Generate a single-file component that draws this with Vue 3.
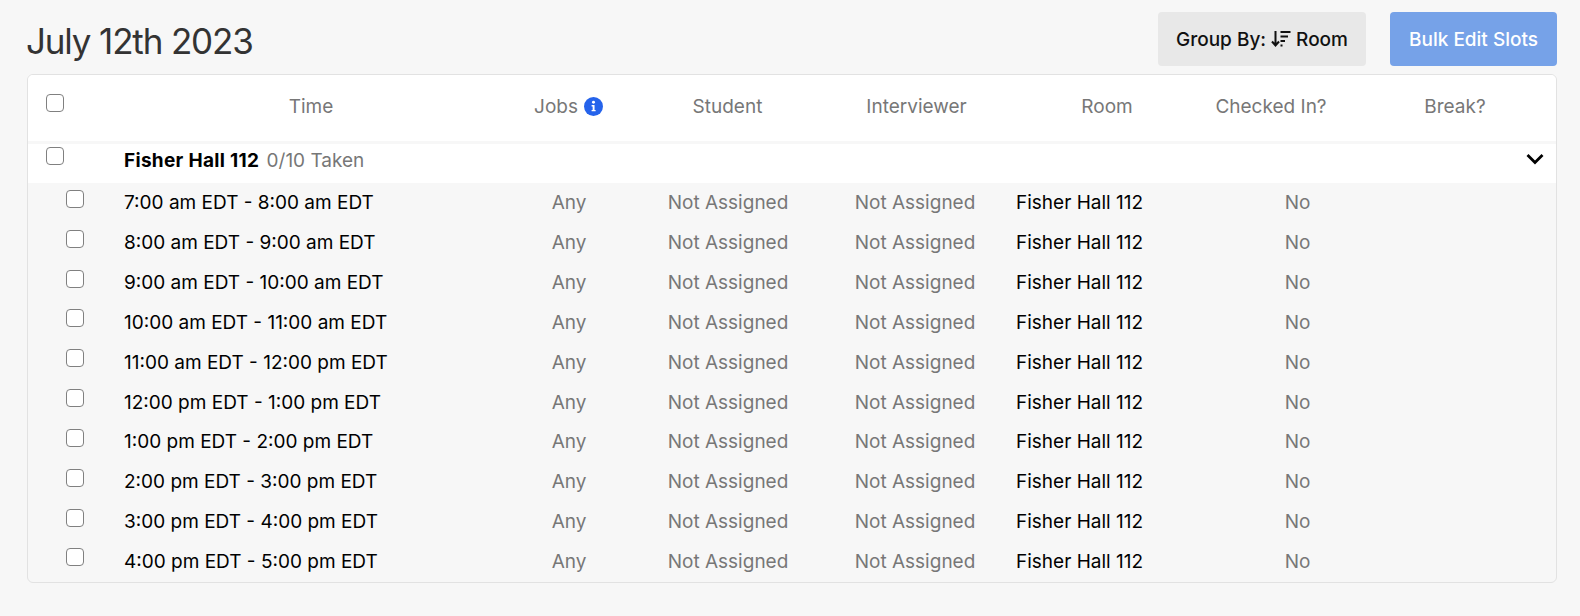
<script setup>
const slots = [
  '7:00 am EDT - 8:00 am EDT',
  '8:00 am EDT - 9:00 am EDT',
  '9:00 am EDT - 10:00 am EDT',
  '10:00 am EDT - 11:00 am EDT',
  '11:00 am EDT - 12:00 pm EDT',
  '12:00 pm EDT - 1:00 pm EDT',
  '1:00 pm EDT - 2:00 pm EDT',
  '2:00 pm EDT - 3:00 pm EDT',
  '3:00 pm EDT - 4:00 pm EDT',
  '4:00 pm EDT - 5:00 pm EDT'
]
</script>

<template>
  <div class="page">
    <div class="top">
      <h1 class="title">July 12th 2023</h1>
      <div class="actions">
        <button class="btn grey">
          Group By:
          <svg class="sort" width="20" height="18" viewBox="0 0 20 18" fill="none" stroke="#111" stroke-width="2">
            <path d="M4.500 1v14.500M1 11.500l3.500 4 3.500-4" />
            <path d="M9.500 2h10M9.500 6.500h7.500M9.500 11h4.500M9.500 15.500h2" />
          </svg>
          Room
        </button>
        <button class="btn blue">Bulk Edit Slots</button>
      </div>
    </div>
    <div class="card">
      <div class="head">
        <div class="box-cell head-box"><span class="box"></span></div>
        <div>Time</div>
        <div class="jobs">Jobs
          <svg width="19" height="19" viewBox="0 0 18 18">
            <circle cx="9" cy="9" r="9" fill="#2563eb" />
            <circle cx="9" cy="5" r="1.4" fill="#fff" />
            <path d="M7.200 7.600h2.800v4.600h1v1.400H7.200v-1.400h1V9H7.200z" fill="#fff" />
          </svg>
        </div>
        <div>Student</div>
        <div>Interviewer</div>
        <div>Room</div>
        <div>Checked In?</div>
        <div class="break">Break?</div>
      </div>
      <div class="group">
        <div class="box-cell group-box"><span class="box"></span></div>
        <div class="group-name"><b>Fisher Hall 112</b> <span>0/10 Taken</span></div>
        <svg class="chev" width="18" height="12" viewBox="0 0 18 12" fill="none" stroke="#000" stroke-width="2.800">
          <path d="M1.500 2l7.500 7.500L16.500 2" />
        </svg>
      </div>
      <div class="rows">
        <div v-for="slot in slots" :key="slot" class="row">
          <div class="box-cell row-box"><span class="box"></span></div>
          <div class="time">{{ slot }}</div>
          <div class="muted">Any</div>
          <div class="muted">Not Assigned</div>
          <div class="muted">Not Assigned</div>
          <div class="room">Fisher Hall 112</div>
          <div class="muted">No</div>
          <div></div>
        </div>
      </div>
    </div>
  </div>
</template>

<style>
html, body { margin: 0; background: #f7f7f7; }
</style>

<style scoped>
.page {
  box-sizing: border-box;
  width: 1580px;
  height: 616px;
  padding: 12px 23px 0 27px;
  background: #f7f7f7;
  font-family: Inter, "Liberation Sans", sans-serif;
  font-size: 19px;
  color: #000;
}
.top {
  display: flex;
  justify-content: space-between;
  height: 62px;
}
.title {
  margin: 0 0 0 -1px;
  padding-top: 9px;
  font-size: 35px;
  line-height: 40px;
  font-weight: 400;
  color: #333;
  letter-spacing: -1.15px;
}
.actions { display: flex; gap: 24px; }
.btn {
  height: 54px;
  border: 0;
  border-radius: 4px;
  font: 500 19px Inter, "Liberation Sans", sans-serif;
  display: flex;
  align-items: center;
  justify-content: center;
  padding: 0;
}
.grey { width: 208px; gap: 5px; background: #e8e8e8; color: #111; }
.blue { width: 167px; background: #76a2e8; color: #fff; }
.sort { display: block; }
.card {
  box-sizing: border-box;
  width: 1530px;
  height: 509px;
  border: 1px solid #e2e2e2;
  border-radius: 6px;
  overflow: hidden;
  background: #f7f7f7;
}
.head {
  display: grid;
  grid-template-columns: 95px 376px 139px 179px 199px 182px 146px 1fr;
  height: 66px;
  background: #fff;
  border-bottom: 3px solid #f7f7f7;
  color: #777;
  text-align: center;
  align-items: center;
}
.head > div { margin-top: -4px; }
.head > .head-box { margin-top: -10px; padding-left: 18px; }
.break { padding-left: 10px; }
.jobs { display: flex; align-items: center; justify-content: center; gap: 6px; }
.box-cell { display: flex; }
.box {
  display: block;
  box-sizing: border-box;
  width: 18px;
  height: 18px;
  border: 1.5px solid #808080;
  border-radius: 4px;
  background: #fff;
}
.group {
  display: flex;
  align-items: center;
  height: 39px;
  background: #fff;
}
.group-box { width: 96px; padding-left: 18px; box-sizing: border-box; margin-top: -15px; }
.group-name { flex: 1; margin-top: -6px; }
.group-name b { font-weight: 700; letter-spacing: 0.3px; }
.group-name span { color: #777; margin-left: 2px; }
.chev { margin: -10px 12px 0 0; }
.rows { display: flex; flex-direction: column; }
.row {
  display: grid;
  grid-template-columns: 96px 372px 146px 172px 202px 196px 171px 1fr;
  height: 39.83px;
  align-items: center;
  white-space: nowrap;
}
.row-box { padding-left: 38px; margin-top: -8px; }
.muted { color: #777; text-align: center; }
.time, .room { color: #000; }
</style>
